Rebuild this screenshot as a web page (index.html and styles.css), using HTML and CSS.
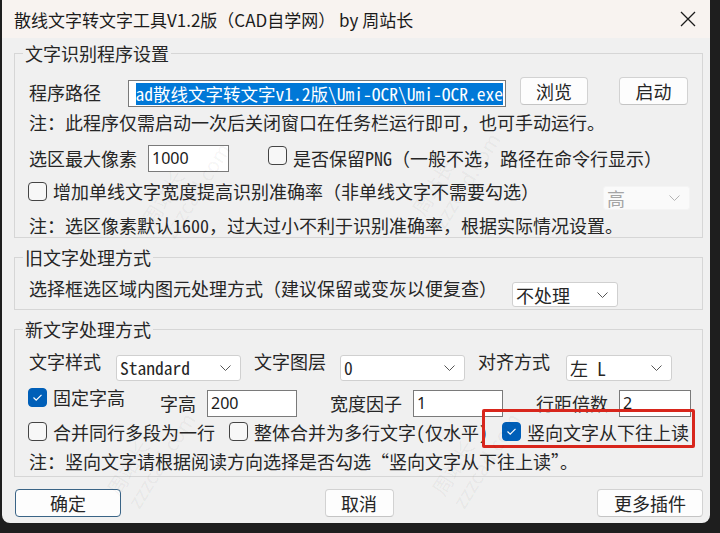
FILE: index.html
```html
<!DOCTYPE html>
<html lang="zh-CN">
<head>
    <meta charset="UTF-8">
    <title>散线文字转文字工具V1.2版</title>
    <link rel="stylesheet" href="styles.css">
</head>
<body>
    <div class="window">
        <div class="titlebar">
            <span class="title">散线文字转文字工具V1.2版（CAD自学网） by 周站长</span>
            <span class="close">
                <svg width="16" height="16" viewBox="0 0 16 16"><path d="M1 1 L15 15 M15 1 L1 15" stroke="#1b1b1b" stroke-width="1.3" fill="none"/></svg>
            </span>
        </div>

        <div class="content">
            <fieldset class="group g-ocr">
                <legend>文字识别程序设置</legend>
                <div class="row r-path">
                    <span class="label">程序路径</span>
                    <div class="edit path"><span class="sel">ad散线文字转文字v1.2版\Umi-OCR\Umi-OCR.exe</span></div>
                    <button class="btn btn-browse">浏览</button>
                    <button class="btn btn-run">启动</button>
                </div>
                <div class="row r-note1">注：此程序仅需启动一次后关闭窗口在任务栏运行即可，也可手动运行。</div>
                <div class="row r-pixel">
                    <span class="label">选区最大像素</span>
                    <div class="edit px-edit">1000</div>
                    <label class="check keep-png"><span class="box up"></span>是否保留PNG（一般不选，路径在命令行显示）</label>
                </div>
                <div class="row r-width">
                    <label class="check first"><span class="box"></span>增加单线文字宽度提高识别准确率（非单线文字不需要勾选）</label>
                    <div class="combo disabled level">高<svg class="chev" width="11" height="6" viewBox="0 0 11 6"><polyline points="0.5,0.5 5.5,5.5 10.5,0.5" fill="none" stroke="#b4b4b4" stroke-width="1"/></svg></div>
                </div>
                <div class="row r-note2">注：选区像素默认1600，过大过小不利于识别准确率，根据实际情况设置。</div>
            </fieldset>

            <fieldset class="group g-old">
                <legend>旧文字处理方式</legend>
                <div class="row r-old">
                    <span class="label">选择框选区域内图元处理方式（建议保留或变灰以便复查）</span>
                    <div class="combo old-mode">不处理<svg class="chev" width="11" height="6" viewBox="0 0 11 6"><polyline points="0.5,0.5 5.5,5.5 10.5,0.5" fill="none" stroke="#555" stroke-width="1"/></svg></div>
                </div>
            </fieldset>

            <fieldset class="group g-new">
                <legend>新文字处理方式</legend>
                <div class="row r-style">
                    <span class="label">文字样式</span>
                    <div class="combo style mono">Standard<svg class="chev" width="11" height="6" viewBox="0 0 11 6"><polyline points="0.5,0.5 5.5,5.5 10.5,0.5" fill="none" stroke="#555" stroke-width="1"/></svg></div>
                    <span class="label gap13">文字图层</span>
                    <div class="combo layer mono">0<svg class="chev" width="11" height="6" viewBox="0 0 11 6"><polyline points="0.5,0.5 5.5,5.5 10.5,0.5" fill="none" stroke="#555" stroke-width="1"/></svg></div>
                    <span class="label gap13">对齐方式</span>
                    <div class="combo align">左 L<svg class="chev" width="11" height="6" viewBox="0 0 11 6"><polyline points="0.5,0.5 5.5,5.5 10.5,0.5" fill="none" stroke="#555" stroke-width="1"/></svg></div>
                </div>
                <div class="row r-height">
                    <label class="check first up"><span class="box on"><svg width="17" height="17" viewBox="0 0 17 17"><polyline points="4.5,8.5 7.2,11.2 12.5,5.8" fill="none" stroke="#fff" stroke-width="1.2"/></svg></span>固定字高</label>
                    <span class="label down h-label">字高</span>
                    <div class="edit down num-w">200</div>
                    <span class="label down w-label">宽度因子</span>
                    <div class="edit down num-w">1</div>
                    <span class="label down w-label">行距倍数</span>
                    <div class="edit down num-s">2</div>
                </div>
                <div class="row r-merge">
                    <label class="check first"><span class="box"></span>合并同行多段为一行</label>
                    <label class="check next"><span class="box"></span>整体合并为多行文字(仅水平)</label>
                    <label class="check next vertical"><span class="box on"><svg width="17" height="17" viewBox="0 0 17 17"><polyline points="4.5,8.5 7.2,11.2 12.5,5.8" fill="none" stroke="#fff" stroke-width="1.2"/></svg></span>竖向文字从下往上读<span class="mark"></span></label>
                </div>
                <div class="row r-note3">注：竖向文字请根据阅读方向选择是否勾选“竖向文字从下往上读”。</div>
            </fieldset>

            <div class="actions">
                <button class="btn btn-ok">确定</button>
                <button class="btn btn-cancel">取消</button>
                <button class="btn btn-more">更多插件</button>
            </div>
        </div>

        <!-- faint site watermark -->
        <span class="wm wm1">周站长<br>zzzcad.com</span>
        <span class="wm wm2">周站长<br>zzzcad.com</span>
        <span class="wm wm3">周站长<br>zzzcad.com</span>
        <span class="wm wm4">周站长<br>zzzcad.com</span>
    </div>
</body>
</html>
```

FILE: styles.css
```css
body {
    margin: 0;
    background-color: #1e1e1e;
    font-family: "Noto Sans Mono CJK SC", "Noto Sans CJK SC", monospace;
    font-size: 18px;
    color: #262626;
}
.window {
    position: relative;
    margin-left: 2px;
    width: 708px;
    height: 523px;
    background-color: #f0f0f0;
    border-radius: 0 0 8px 8px;
    overflow: hidden;
}
.titlebar {
    height: 38px;
    background-color: #f8f3f0;
    display: flex;
    align-items: center;
    padding-left: 12px;
}
.title {
    font-family: "Noto Sans CJK SC", sans-serif;
    font-size: 17px;
    color: #1b1b1b;
    white-space: nowrap;
}
.close {
    margin-left: auto;
    margin-right: 14px;
    display: flex;
}
.content {
    padding: 5px 7px 6px 12px;
}

/* group boxes */
.group {
    margin: 0;
    padding: 0 8px;
    border: 1px solid #d6d6d6;
    min-width: 0;
}
.group + .group {
    margin-top: 9px;
}
.group legend {
    padding: 0 2px;
    line-height: 20px;
}
.row {
    display: flex;
    align-items: center;
    padding-left: 6px;
    white-space: nowrap;
    line-height: 20px;
}
.r-path { margin-top: 14px; height: 30px; }
.r-note1 { height: 29px; }
.r-pixel { height: 44px; }
.r-width { height: 22px; }
.r-note2 { margin-top: 10px; height: 25px; }
.r-old { height: 42px; }
.r-style { height: 44px; }
.r-height { height: 34px; }
.r-merge { height: 29px; }
.r-note3 { height: 30px; }

/* edit boxes */
.edit {
    height: 27px;
    box-sizing: border-box;
    background-color: #fff;
    border: 1px solid #7a7a7a;
    font-family: "Noto Sans", sans-serif;
    font-size: 16px;
    color: #1a1a1a;
    padding-left: 3px;
    display: flex;
    align-items: center;
}
.path {
    margin-left: 27px;
    width: 378px;
    margin-top: 3px;
    justify-content: flex-end;
    overflow: hidden;
    padding: 0 2px;
}
.sel {
    flex-shrink: 0;
    background-color: #0078d7;
    color: #fff;
    font-family: "Noto Sans Mono CJK SC", "Liberation Mono", monospace;
    font-size: 17.5px;
    line-height: 22px;
    height: 22px;
}
.px-edit {
    margin-left: 11px;
    width: 81px;
}
.num-w { width: 90px; margin-left: 11px; }
.num-s { width: 72px; margin-left: 11px; }

/* push buttons */
.btn {
    height: 28px;
    box-sizing: border-box;
    background-color: #fdfdfd;
    border: 1px solid #d2d2d2;
    border-bottom-color: #c4c4c4;
    border-radius: 4px;
    font-family: "Noto Sans Mono CJK SC", "Noto Sans CJK SC", monospace;
    font-size: 18px;
    color: #262626;
    padding: 0;
}
.btn-browse { margin-left: 14px; width: 68px; margin-bottom: 2px; }
.btn-run { margin-left: 31px; width: 69px; margin-bottom: 2px; }

/* checkboxes */
.check {
    display: flex;
    align-items: center;
    gap: 6px;
    height: 20px;
}
.check.first { margin-left: -1px; }
.check.next { margin-left: 14px; }
.keep-png { margin-left: 39px; }
.box {
    width: 19px;
    height: 19px;
    box-sizing: border-box;
    border: 1px solid #444;
    border-radius: 4px;
    background-color: #f7f7f7;
    display: flex;
    align-items: center;
    justify-content: center;
}
.box.up { margin-bottom: 6px; }
.box.on {
    background-color: #005fb8;
    border-color: #005fb8;
}

/* drop-down lists */
.combo {
    height: 26px;
    box-sizing: border-box;
    background-color: #fff;
    border: 1px solid #d0d0d0;
    border-radius: 3px;
    display: flex;
    align-items: center;
    padding: 0 9px 0 3px;
    font-size: 18px;
}
.combo .chev { margin-left: auto; }
.combo.mono {
    font-family: "Noto Sans Mono CJK SC", "Liberation Mono", monospace;
    font-size: 17.5px;
}
.combo.disabled {
    background-color: #fafafa;
    border-color: #f4f4f4;
    color: #a5a5a5;
}
.level { margin-left: auto; margin-right: 4px; width: 87px; height: 24px; margin-top: 13px; }
.old-mode { margin-left: 15px; width: 106px; height: 25px; margin-top: 13px; }
.style { margin-left: 15px; width: 125px; margin-top: 14px; }
.layer { margin-left: 14px; width: 125px; margin-top: 14px; }
.align { margin-left: 16px; width: 106px; margin-top: 14px; }
.gap13 { margin-left: 13px; }

.r-height .up { margin-bottom: 6px; }
.r-height .down { margin-top: 6px; }
.h-label { margin-left: 35px; }
.w-label { margin-left: 33px; }

/* red highlight frame around the vertical reading option */
.vertical { position: relative; }
.mark {
    position: absolute;
    left: -20px;
    right: -6px;
    top: -13px;
    bottom: -6px;
    border: 3px solid #d8261c;
    border-radius: 2px;
}

.actions {
    margin-top: 12px;
    padding-left: 1px;
    display: flex;
    justify-content: space-between;
}
.btn-ok { width: 106px; border-color: #3a6486; }
.btn-cancel { width: 69px; }
.btn-more { width: 106px; }

.wm {
    position: absolute;
    font-family: "Noto Sans CJK SC", sans-serif;
    font-size: 20px;
    line-height: 24px;
    color: rgba(0, 0, 0, 0.05);
    transform: rotate(-58deg);
    white-space: nowrap;
    pointer-events: none;
}
.wm1 { left: 130px; top: 160px; }
.wm2 { left: 400px; top: 150px; }
.wm3 { left: 95px; top: 430px; }
.wm4 { left: 420px; top: 430px; }
```
